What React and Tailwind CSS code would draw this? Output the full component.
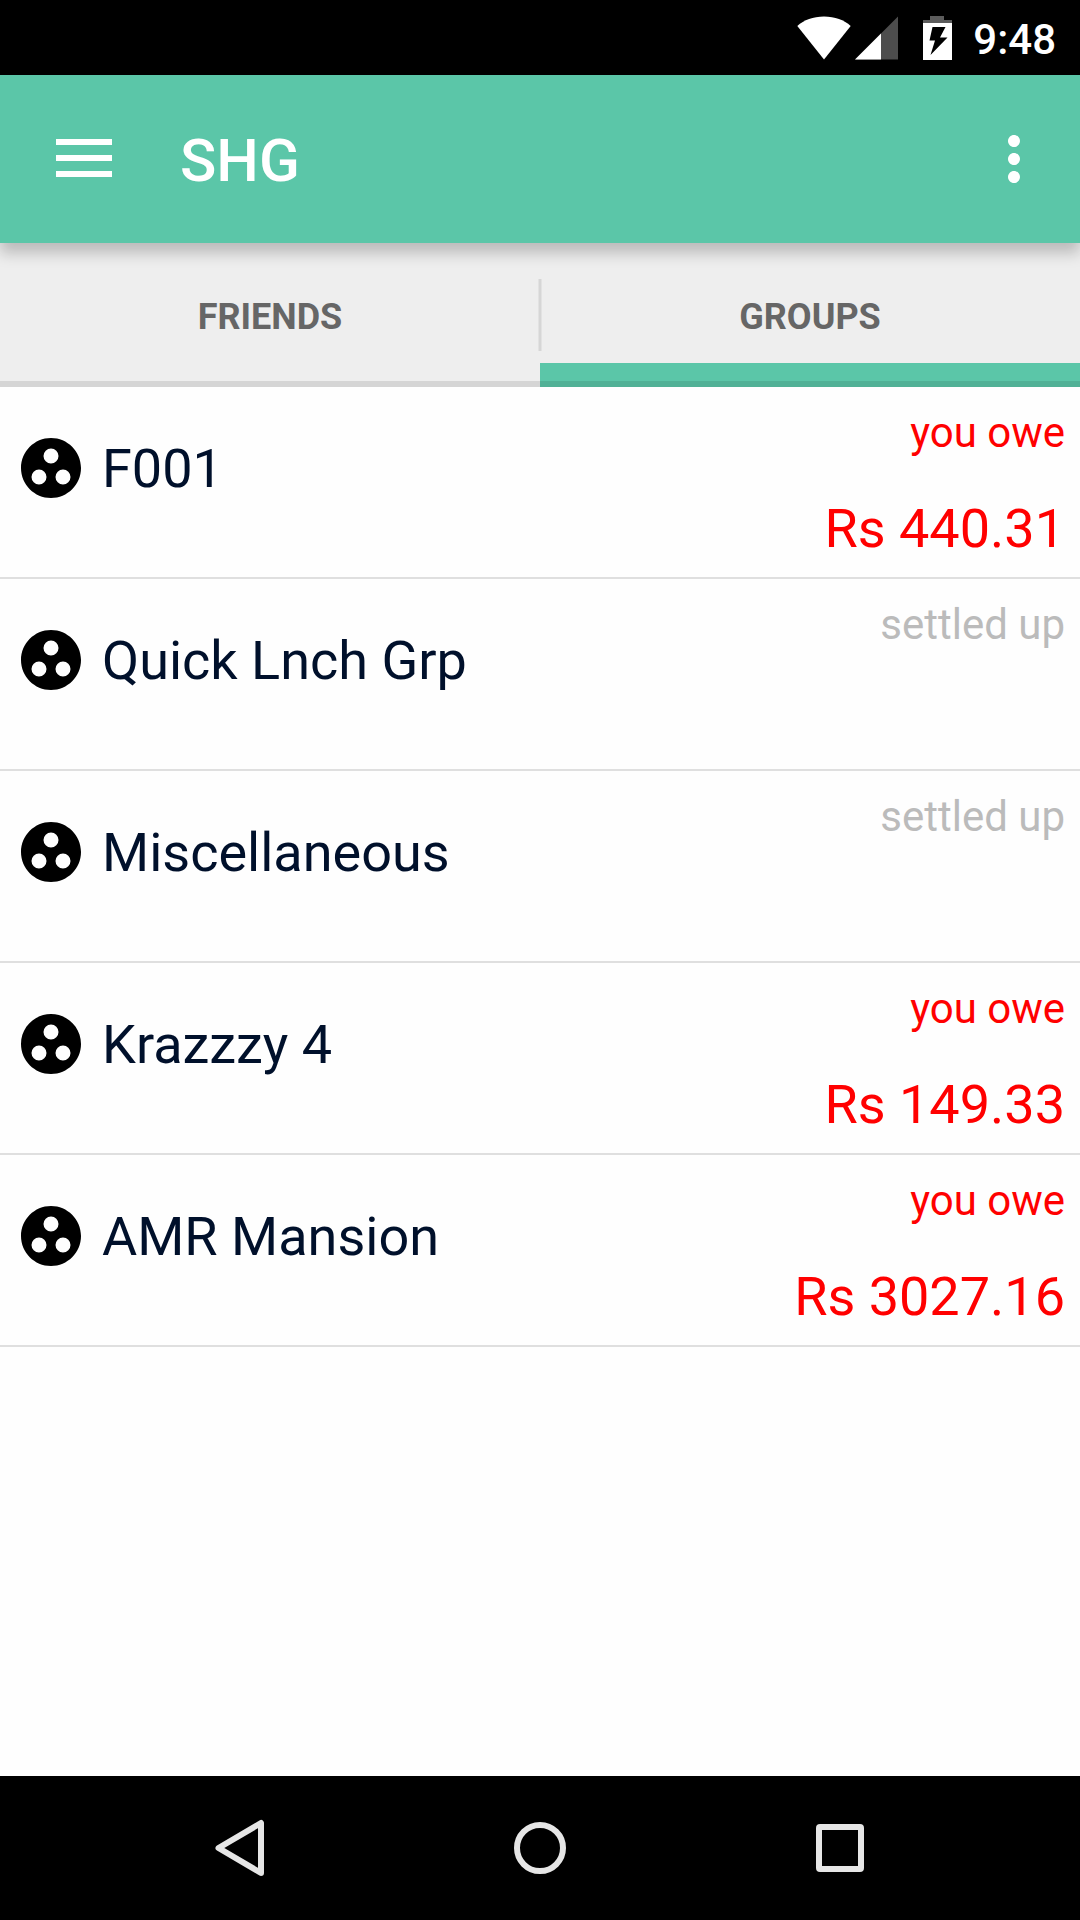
import React, { useState } from "react";
import { MdGroupWork, MdMoreVert } from "react-icons/md";

const groups = [
  { name: "F001", amount: "Rs 440.31" },
  { name: "Quick Lnch Grp" },
  { name: "Miscellaneous" },
  { name: "Krazzzy 4", amount: "Rs 149.33" },
  { name: "AMR Mansion", amount: "Rs 3027.16" },
];

function StatusBar() {
  return (
    <div className="flex h-[75px] items-center justify-end bg-black pr-6 text-white">
      <svg width="54" height="44" viewBox="0 0 54 44" aria-hidden="true">
        <path d="M27 43.5 0.3 10C7 4 16 0.5 27 0.5S47 4 53.7 10Z" fill="#fff" />
      </svg>
      <svg className="ml-1" width="43" height="44" viewBox="0 0 43 44" aria-hidden="true">
        <path d="M43 0.5V43.5H0Z" fill="#4d4d4d" />
        <path d="M26 17.5V43.5H0Z" fill="#fff" />
      </svg>
      <svg className="ml-6" width="30" height="44" viewBox="0 0 30 44" aria-hidden="true">
        <path d="M8 0H22V4H30V7H1V4H8Z" fill="#5c5c5c" />
        <path d="M1 7H30V44H1Z" fill="#fff" />
        <path d="M10.5 11H23.5L18 21.500H25.500L8.500 39L13 24.500H7.500Z" fill="#000" />
      </svg>
      <span className="ml-[21px] pt-1 text-[42px] leading-none font-medium">9:48</span>
    </div>
  );
}

function AppBar() {
  return (
    <header className="relative z-10 flex h-[168px] items-center bg-[#5bc6a8] pr-[30px] pl-14 text-white shadow-[0_10px_14px_rgba(0,0,0,0.22)]">
      <button type="button" aria-label="Open menu" className="flex h-[72px] items-center">
        <svg width="56" height="40" viewBox="0 0 56 40" aria-hidden="true">
          <path d="M0 0H56V6H0ZM0 16H56V22H0ZM0 32H56V38H0Z" fill="currentColor" />
        </svg>
      </button>
      <h1 className="flex-1 pt-1 pl-[68px] text-[60px] leading-none font-medium">SHG</h1>
      <button type="button" aria-label="More options">
        <MdMoreVert size={72} />
      </button>
    </header>
  );
}

function Tabs({ active, onChange }) {
  return (
    <div role="tablist" className="relative flex h-36 bg-[#eeeeee]">
      {["FRIENDS", "GROUPS"].map((label) => (
        <button
          key={label}
          type="button"
          role="tab"
          aria-selected={active === label}
          onClick={() => onChange(label)}
          className={
            "flex flex-1 items-center justify-center pt-1 text-[36px] leading-none font-bold text-[#666666] " +
            (active === label ? "shadow-[inset_0_-24px_0_#5bc6a8]" : "")
          }
        >
          {label}
        </button>
      ))}
      <div className="absolute top-9 left-1/2 h-[72px] w-[3px] -translate-x-1/2 bg-[#d6d6d6]" />
      <div className="absolute inset-x-0 bottom-0 h-1.5 bg-black/10" />
    </div>
  );
}

function GroupRow({ name, amount }) {
  return (
    <li className="flex h-48 items-start border-b-2 border-[#dfdfdf] px-[15px]">
      <MdGroupWork size={72} className="mt-[45px] shrink-0 text-black" />
      <span className="mt-[50px] ml-[15px] flex-1 text-[54px] leading-[63px] text-[#00102b]">{name}</span>
      <div className={"flex flex-col items-end pt-[21px] " + (amount ? "text-[#ff0000]" : "text-[#bbbbbb]")}>
        <span className="text-[42px] leading-[50px]">{amount ? "you owe" : "settled up"}</span>
        {amount && <span className="mt-[39px] text-[54px] leading-[63px]">{amount}</span>}
      </div>
    </li>
  );
}

function NavBar() {
  return (
    <nav className="flex h-36 items-stretch bg-black px-[90px] text-[#e6e6e6]">
      <button type="button" aria-label="Back" className="flex flex-1 items-center justify-center">
        <svg width="60" height="60" viewBox="0 0 60 60" fill="none" stroke="currentColor" strokeWidth="6" strokeLinejoin="round" aria-hidden="true">
          <path d="M51 5V55L8.500 30Z" />
        </svg>
      </button>
      <button type="button" aria-label="Home" className="flex flex-1 items-center justify-center">
        <svg width="52" height="52" viewBox="0 0 52 52" fill="none" stroke="currentColor" strokeWidth="6" aria-hidden="true">
          <circle cx="26" cy="26" r="23" />
        </svg>
      </button>
      <button type="button" aria-label="Recent apps" className="flex flex-1 items-center justify-center">
        <svg width="48" height="48" viewBox="0 0 48 48" aria-hidden="true">
          <path
            d="M4 0H44Q48 0 48 4V44Q48 48 44 48H4Q0 48 0 44V4Q0 0 4 0ZM6 6V42H42V6Z"
            fill="currentColor"
            fillRule="evenodd"
          />
        </svg>
      </button>
    </nav>
  );
}

export default function App() {
  const [tab, setTab] = useState("GROUPS");
  return (
    <div className="flex min-h-screen flex-col bg-[#fefefe] font-[Roboto,sans-serif]">
      <StatusBar />
      <AppBar />
      <Tabs active={tab} onChange={setTab} />
      <main className="flex-1">
        <ul>
          {groups.map((group) => (
            <GroupRow key={group.name} {...group} />
          ))}
        </ul>
      </main>
      <NavBar />
    </div>
  );
}
